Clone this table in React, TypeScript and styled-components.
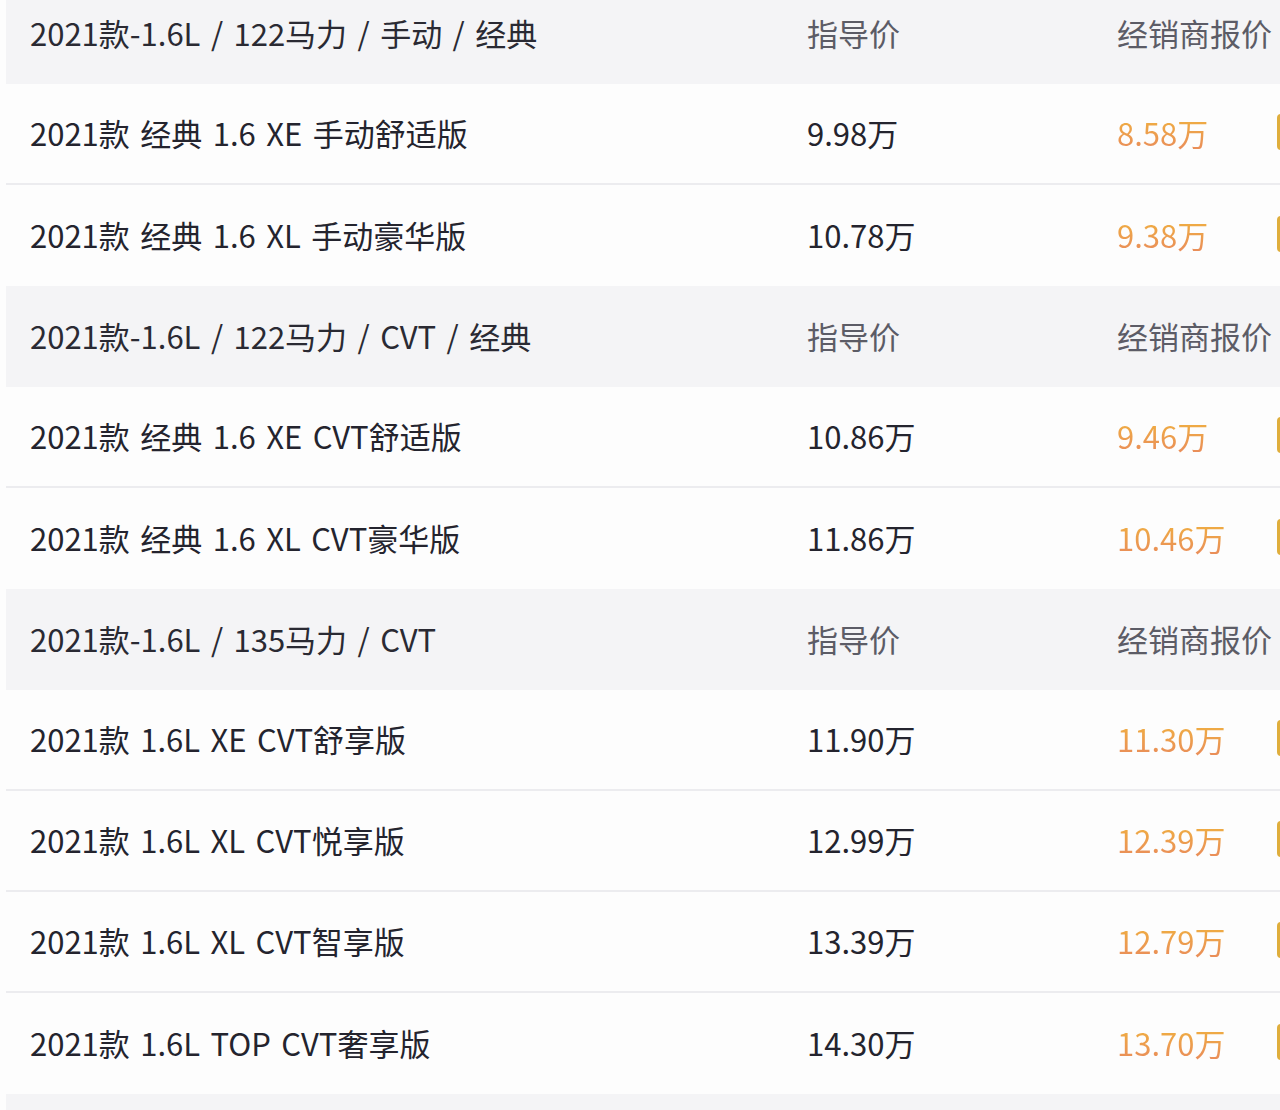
import React from "react";
import styled, { createGlobalStyle } from "styled-components";

interface Trim {
  name: string;
  guide: string;
  dealer: string;
}

interface Group {
  title: string;
  trims: Trim[];
}

const groups: Group[] = [
  {
    title: "2021款-1.6L / 122马力 / 手动 / 经典",
    trims: [
      { name: "2021款 经典 1.6 XE 手动舒适版", guide: "9.98万", dealer: "8.58万" },
      { name: "2021款 经典 1.6 XL 手动豪华版", guide: "10.78万", dealer: "9.38万" },
    ],
  },
  {
    title: "2021款-1.6L / 122马力 / CVT / 经典",
    trims: [
      { name: "2021款 经典 1.6 XE CVT舒适版", guide: "10.86万", dealer: "9.46万" },
      { name: "2021款 经典 1.6 XL CVT豪华版", guide: "11.86万", dealer: "10.46万" },
    ],
  },
  {
    title: "2021款-1.6L / 135马力 / CVT",
    trims: [
      { name: "2021款 1.6L XE CVT舒享版", guide: "11.90万", dealer: "11.30万" },
      { name: "2021款 1.6L XL CVT悦享版", guide: "12.99万", dealer: "12.39万" },
      { name: "2021款 1.6L XL CVT智享版", guide: "13.39万", dealer: "12.79万" },
      { name: "2021款 1.6L TOP CVT奢享版", guide: "14.30万", dealer: "13.70万" },
    ],
  },
  {
    title: "2021款-1.6L / 135马力 / CVT / 运动",
    trims: [],
  },
];

const GlobalStyle = createGlobalStyle`
  html, body {
    margin: 0;
    padding: 0;
    background: #fdfdfd;
    overflow: hidden;
  }
  body {
    font-family: "Noto Sans CJK SC", "Noto Sans", sans-serif;
  }
  * {
    box-sizing: border-box;
  }
`;

const Table = styled.div`
  width: 1400px;
  margin: -17px 0 0 6px;
`;

const Row = styled.div<{ $head?: boolean; $line?: boolean }>`
  display: grid;
  grid-template-columns: 777px 310px 160px 1fr;
  align-items: center;
  height: 101px;
  padding: 0 0 3px 24px;
  background: ${(p) => (p.$head ? "#f4f4f6" : "#fdfdfd")};
  border-bottom: ${(p) => (p.$line ? "2px solid #ececef" : "none")};
  font-size: 31px;
  word-spacing: 3.5px;
  color: ${(p) => (p.$head ? "#2a2a33" : "#24242e")};
`;

const Label = styled.span`
  color: #5c5c66;
`;

const Name = styled.span`
  white-space: nowrap;
`;

const Dealer = styled.span`
  background: linear-gradient(180deg, #f0b23e 10%, #e98a5c 95%);
  -webkit-background-clip: text;
  background-clip: text;
  color: transparent;
`;

const AskButton = styled.div`
  width: 110px;
  height: 36px;
  border-left: 3px solid #dfae3c;
  border-radius: 4px;
  background: #fdfdfd;
`;

export default function App() {
  return (
    <>
      <GlobalStyle />
      <Table>
        {groups.map((g) => (
          <React.Fragment key={g.title}>
            <Row $head>
              <Name>{g.title}</Name>
              <Label>指导价</Label>
              <Label>经销商报价</Label>
              <span />
            </Row>
            {g.trims.map((t, i) => (
              <Row key={t.name} $line={i < g.trims.length - 1}>
                <Name>{t.name}</Name>
                <span>{t.guide}</span>
                <Dealer>{t.dealer}</Dealer>
                <AskButton />
              </Row>
            ))}
          </React.Fragment>
        ))}
      </Table>
    </>
  );
}
